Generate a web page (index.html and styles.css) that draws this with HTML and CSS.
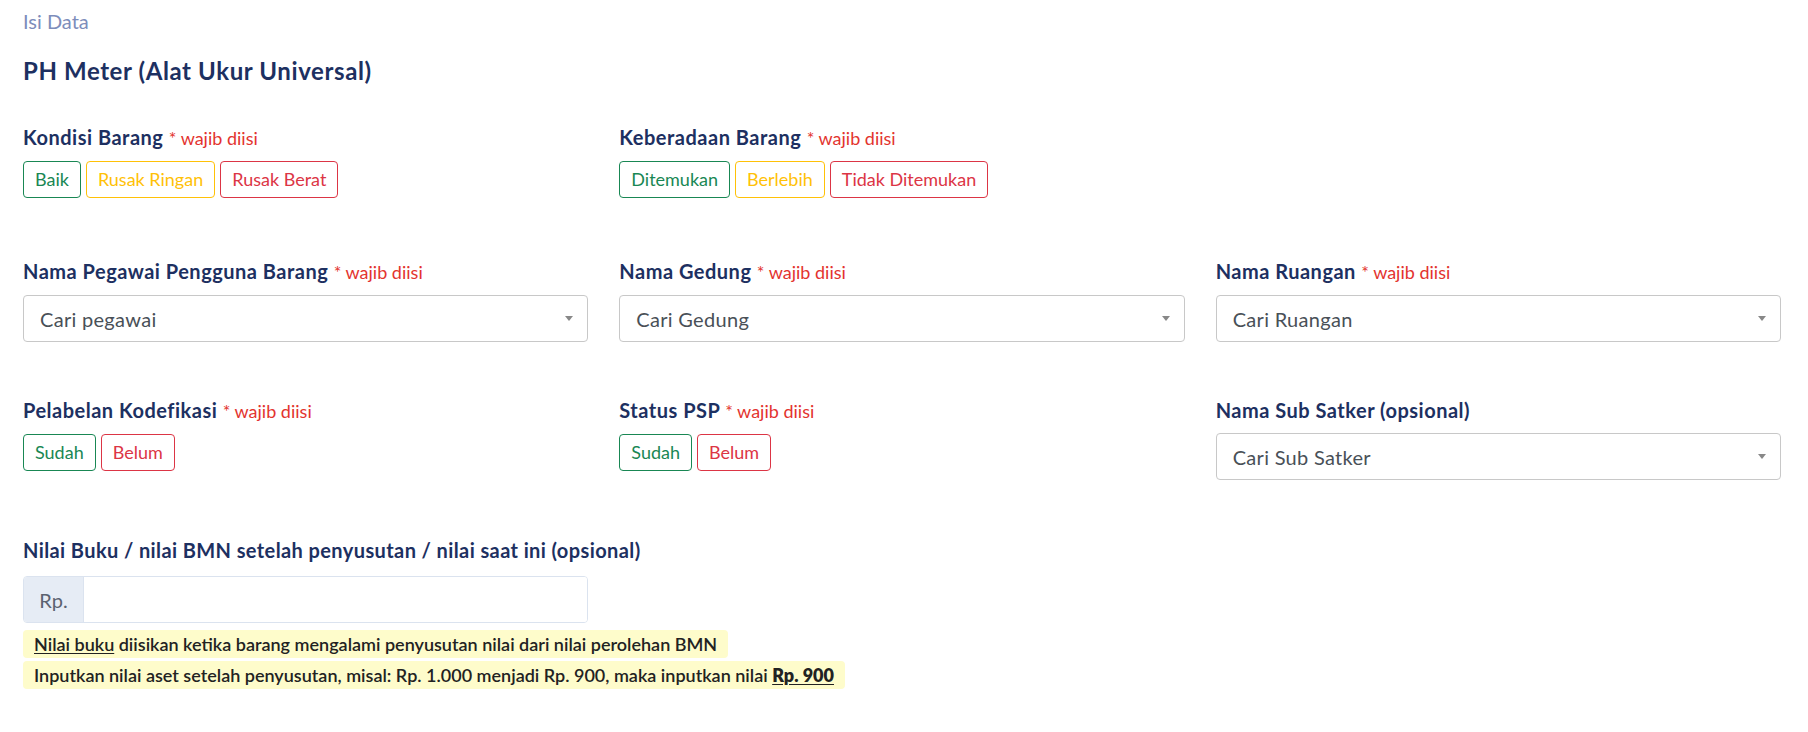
FILE: index.html
```html
<!DOCTYPE html>
<html lang="id">
<head>
<meta charset="utf-8">
<title>Isi Data</title>
<link rel="stylesheet" href="styles.css">
</head>
<body>
<div class="page">
  <div class="crumb">Isi Data</div>
  <h1 class="title">PH Meter (Alat Ukur Universal)</h1>

  <div class="row r1">
    <div class="field">
      <label class="lbl">Kondisi Barang <span class="req">* wajib diisi</span></label>
      <div class="btns">
        <button class="ob ob-success">Baik</button>
        <button class="ob ob-warning">Rusak Ringan</button>
        <button class="ob ob-danger">Rusak Berat</button>
      </div>
    </div>
    <div class="field">
      <label class="lbl">Keberadaan Barang <span class="req">* wajib diisi</span></label>
      <div class="btns">
        <button class="ob ob-success">Ditemukan</button>
        <button class="ob ob-warning">Berlebih</button>
        <button class="ob ob-danger">Tidak Ditemukan</button>
      </div>
    </div>
    <div class="field"></div>
  </div>

  <div class="row r2">
    <div class="field">
      <label class="lbl">Nama Pegawai Pengguna Barang <span class="req">* wajib diisi</span></label>
      <div class="sel"><span class="sel-text">Cari pegawai</span><span class="arrow"></span></div>
    </div>
    <div class="field">
      <label class="lbl">Nama Gedung <span class="req">* wajib diisi</span></label>
      <div class="sel"><span class="sel-text">Cari Gedung</span><span class="arrow"></span></div>
    </div>
    <div class="field">
      <label class="lbl">Nama Ruangan <span class="req">* wajib diisi</span></label>
      <div class="sel"><span class="sel-text">Cari Ruangan</span><span class="arrow"></span></div>
    </div>
  </div>

  <div class="row r3">
    <div class="field">
      <label class="lbl">Pelabelan Kodefikasi <span class="req">* wajib diisi</span></label>
      <div class="btns">
        <button class="ob ob-success">Sudah</button>
        <button class="ob ob-danger">Belum</button>
      </div>
    </div>
    <div class="field">
      <label class="lbl">Status PSP <span class="req">* wajib diisi</span></label>
      <div class="btns">
        <button class="ob ob-success">Sudah</button>
        <button class="ob ob-danger">Belum</button>
      </div>
    </div>
    <div class="field">
      <label class="lbl">Nama Sub Satker (opsional)</label>
      <div class="sel"><span class="sel-text">Cari Sub Satker</span><span class="arrow"></span></div>
    </div>
  </div>

  <div class="row r4">
    <div class="field">
      <label class="lbl lbl-wide">Nilai Buku / nilai BMN setelah penyusutan / nilai saat ini (opsional)</label>
      <div class="igroup">
        <span class="addon">Rp.</span>
        <input class="ginput" type="text">
      </div>
      <div class="notes">
        <mark class="note"><u>Nilai buku</u> diisikan ketika barang mengalami penyusutan nilai dari nilai perolehan BMN</mark>
        <mark class="note">Inputkan nilai aset setelah penyusutan, misal: Rp. 1.000 menjadi Rp. 900, maka inputkan nilai <u class="strong">Rp. 900</u></mark>
      </div>
    </div>
  </div>
</div>
</body>
</html>
```

FILE: styles.css
```css
* { box-sizing: border-box; }
html, body { margin: 0; padding: 0; background: #fff; }
body {
  font-family: Lato, "Noto Sans", sans-serif;
  color: #212529;
  font-size: 17px;
}
.page {
  padding: 8px 27px 0 23px;
}
.crumb {
  color: #7d8dbb;
  font-size: 20px;
  line-height: 26px;
}
.title {
  margin: 21px 0 37px;
  font-size: 24px;
  letter-spacing: 0.6px;
  line-height: 32px;
  font-weight: 700;
  color: #1d3061;
}
.row {
  display: grid;
  grid-template-columns: repeat(3, minmax(0, 1fr));
  column-gap: 31px;
  margin-bottom: 57px;
}
.r1 { margin-bottom: 60px; }
.r2 { margin-bottom: 55px; }
.lbl {
  display: block;
  font-size: 20px;
  letter-spacing: 0.5px;
  line-height: 26px;
  font-weight: 700;
  color: #1d3061;
  margin-bottom: 10px;
  white-space: nowrap;
}
.lbl-wide {
  letter-spacing: 0.4px;
  margin-bottom: 13px;
}
.req {
  font-weight: 400;
  font-size: 18px;
  letter-spacing: 0;
  color: #e3342f;
}
.btns {
  display: flex;
  gap: 5px;
}
.ob {
  height: 37px;
  padding: 0 11px;
  background: #fff;
  border: 1px solid;
  border-radius: 4px;
  font-family: inherit;
  font-size: 18px;
  line-height: 35px;
}
.ob-success { color: #198754; border-color: #198754; }
.ob-warning { color: #ffc107; border-color: #ffc107; }
.ob-danger { color: #dc3545; border-color: #dc3545; }
.sel {
  height: 47px;
  border: 1px solid #c8c8c8;
  border-radius: 4px;
  display: flex;
  align-items: center;
  padding: 0 14px 0 16px;
  justify-content: space-between;
}
.sel-text {
  font-size: 20px;
  letter-spacing: 0.3px;
  color: #495057;
}
.arrow {
  width: 0;
  height: 0;
  border-style: solid;
  border-width: 5px 4px 0 4px;
  border-color: #888 transparent transparent transparent;
}
.igroup {
  display: flex;
  height: 47px;
  border: 1px solid #dbe3ef;
  border-radius: 4px;
  overflow: hidden;
}
.addon {
  width: 60px;
  background: #e6ecf5;
  color: #5b6270;
  font-size: 20px;
  display: flex;
  align-items: center;
  justify-content: center;
  border-right: 1px solid #dbe3ef;
}
.ginput {
  flex: 1;
  min-width: 0;
  border: 0;
  outline: none;
  font-family: inherit;
  font-size: 18px;
  padding: 0 12px;
}
.notes {
  margin-top: 7px;
  display: flex;
  flex-direction: column;
  align-items: flex-start;
  gap: 3px;
}
.note {
  background: #fefccb;
  color: #222;
  font-size: 18px;
  font-weight: 600;
  line-height: 28px;
  padding: 0 11px;
  border-radius: 4px;
  white-space: nowrap;
}
.note u { text-underline-offset: 2px; }
.strong { font-weight: 800; }
```
